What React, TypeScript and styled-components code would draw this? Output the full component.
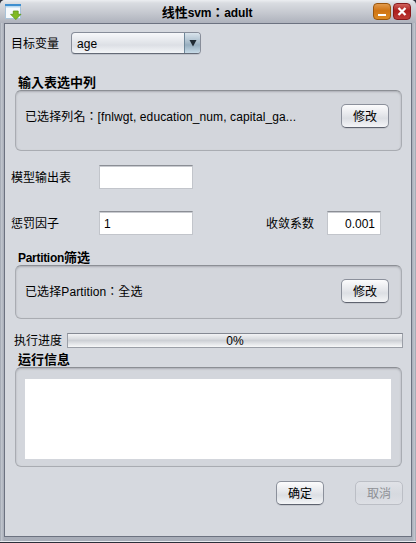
import React from 'react';
import styled, { createGlobalStyle } from 'styled-components';

const GlobalStyle = createGlobalStyle`
  * { box-sizing: border-box; }
  body { margin: 0; overflow: hidden; background: #2b2f3a; }
  input, textarea, button { font: inherit; color: inherit; margin: 0; }
`;

const Frame = styled.div`
  width: 416px;
  height: 542px;
  display: flex;
  flex-direction: column;
  padding: 0 4px 4px;
  background: linear-gradient(90deg, #8d939f 0, #c3c8d0 1px, #a8adb8 4px, #a8adb8 412px, #c3c8d0 415px, #8d939f 416px);
  border-bottom: 1px solid #e9ebef;
  border-radius: 5px 5px 0 0;
  overflow: hidden;
  color: #000;
  font: 12px/16px 'Liberation Sans', 'Noto Sans CJK TC', sans-serif;
`;

const TitleBar = styled.header`
  height: 23px;
  flex: none;
  margin: 0 -4px;
  padding: 3px 5px 0;
  display: grid;
  grid-template-columns: 36px 1fr 38px;
  align-items: start;
  background: linear-gradient(#eceef1 0, #d9dce1 3px, #c7cad1 12px, #aeb2bc 23px);
`;

const Title = styled.h1`
  margin: 1px 0 0;
  text-align: center;
  font-size: 13px;
  line-height: 17px;
  white-space: nowrap;
`;

const TitleLatin = styled.span`
  font-size: 12px;
  letter-spacing: -0.15px;
`;

const Controls = styled.div`
  display: flex;
  gap: 2px;
`;

const ControlButton = styled.button<{ $tone: 'amber' | 'red' }>`
  width: 18px;
  height: 17px;
  padding: 0;
  display: flex;
  border-radius: 4px;
  border: 1px solid ${p => (p.$tone === 'amber' ? '#9a560d' : '#85191b')};
  background: ${p =>
    p.$tone === 'amber'
      ? 'linear-gradient(#e29a4c, #cf7413 45%, #dc8a22)'
      : 'linear-gradient(#d0625c, #ab1f1e 45%, #bd3a35)'};
`;

const Content = styled.main`
  flex: 1;
  display: flex;
  flex-direction: column;
  border: 1px solid #6c7280;
  background: #d6d9df;
  padding: 8px 8px 0 6px;
`;

const Row = styled.div<{ $top?: number }>`
  display: flex;
  align-items: center;
  flex: none;
  margin-top: ${p => p.$top ?? 0}px;
`;

const Label = styled.label<{ $width: number; $gap?: number }>`
  width: ${p => p.$width}px;
  margin-left: ${p => p.$gap ?? 0}px;
  padding-top: 2px;
  white-space: nowrap;
`;

const Combo = styled.div`
  width: 130px;
  height: 22px;
  display: flex;
  border: 1px solid #878d99;
  border-bottom-color: #646a76;
  border-radius: 4px;
  overflow: hidden;
  background: linear-gradient(#f7f8fa, #e1e4e9 50%, #dcdfe5 60%, #f4f6f8);
  box-shadow: 0 1px 0 #bfc3cb;
`;

const ComboValue = styled.span`
  flex: 1;
  padding: 3px 0 0 5px;
  letter-spacing: 0.1px;
`;

const ComboArrow = styled.span`
  width: 16px;
  display: flex;
  align-items: center;
  justify-content: center;
  border-left: 1px solid #6f8799;
  background: linear-gradient(#d9e4ec, #a5b9c8 50%, #97aebf 60%, #c7dbe8);
`;

const Field = styled.input<{ $width: number; $align?: 'left' | 'right' }>`
  width: ${p => p.$width}px;
  height: 24px;
  padding: 1px 5px 0 4px;
  text-align: ${p => p.$align ?? 'left'};
  border: 1px solid #c2c5cb;
  border-top: 1px solid #8b8e95;
  border-radius: 0;
  outline: none;
  background: #fff;
  box-shadow: inset 0 1px 0 #c9cbd0;
`;

const GroupTitle = styled.h2<{ $top: number }>`
  flex: none;
  margin: ${p => p.$top}px 0 0 7px;
  height: 15px;
  font-size: 13px;
  line-height: 16px;
`;

const GroupLatin = styled.span`
  font-size: 12px;
  letter-spacing: -0.3px;
`;

const Group = styled.section<{ $height: number; $bottom?: number }>`
  flex: none;
  width: 387px;
  height: ${p => p.$height}px;
  margin-left: 4px;
  padding: 0 12px ${p => p.$bottom ?? 0}px 9px;
  display: flex;
  align-items: center;
  justify-content: space-between;
  border: 1px solid #a9acb2;
  border-top-color: #8c8f95;
  border-radius: 6px;
  background: #d3d6dc;
  box-shadow: inset 0 1px 2px #aaadb3;
`;

const GroupText = styled.span`
  padding-top: 1px;
  letter-spacing: 0.1px;
  white-space: nowrap;
`;

const Button = styled.button`
  width: 48px;
  height: 24px;
  padding: 1px 0 0;
  line-height: 20px;
  border: 1px solid #8b909b;
  border-bottom-color: #5e636f;
  border-radius: 5px;
  background: linear-gradient(#fcfcfd, #e5e7eb 45%, #dcdfe4 60%, #f4f5f7);
  box-shadow: 0 1px 0 #c3c6cc;

  &:disabled {
    color: #8e9095;
    border-color: #bbbec5;
    background: linear-gradient(#e0e2e7, #d6d9df 55%, #dddfe4);
    box-shadow: none;
  }
`;

const Progress = styled.div`
  width: 336px;
  height: 15px;
  text-align: center;
  line-height: 14px;
  border: 1px solid #9b9fa7;
  border-top-color: #858993;
  background: linear-gradient(#f2f3f5, #dcdee2 35%, #cdd0d5 50%, #e3e5e8 75%, #f7f8f9);
`;

const Log = styled.textarea`
  width: 366px;
  flex: none;
  height: 80px;
  margin-top: 4px;
  border: 0;
  resize: none;
  outline: none;
  background: #fff;
`;

const Actions = styled.div`
  display: flex;
  gap: 31px;
  margin: 14px 0 0 265px;
`;

function WindowIcon() {
  return (
    <svg width="17" height="17" viewBox="0 0 17 17">
      <rect x="0.5" y="1.5" width="15" height="14" fill="#f6f9fc" stroke="#a9c3d9" />
      <path d="M0 1H16V3H0Z" fill="#3f8fd0" />
      <path d="M1 3H15V4.5H1Z" fill="#b9d9f0" />
      <path d="M8.3 8H13.2V11.3H16L10.8 16.6L5.6 11.3H8.3Z" fill="#81ba22" stroke="#5d9815" strokeWidth="0.8" />
    </svg>
  );
}

export default function App() {
  return (
    <>
      <GlobalStyle />
      <Frame>
        <TitleBar>
          <WindowIcon />
          <Title>
            线性<TitleLatin>svm</TitleLatin>：<TitleLatin>adult</TitleLatin>
          </Title>
          <Controls>
            <ControlButton $tone="amber" aria-label="最小化">
              <svg width="16" height="15" viewBox="0 0 16 15">
                <path d="M4 10H12V12H4Z" fill="#fff" />
              </svg>
            </ControlButton>
            <ControlButton $tone="red" aria-label="关闭">
              <svg width="16" height="15" viewBox="0 0 16 15">
                <path d="M4.5 4L11.5 11M11.5 4L4.5 11" stroke="#fff" strokeWidth="2.3" />
              </svg>
            </ControlButton>
          </Controls>
        </TitleBar>
        <Content>
          <Row>
            <Label $width={60}>目标变量</Label>
            <Combo>
              <ComboValue>age</ComboValue>
              <ComboArrow>
                <svg width="8" height="7" viewBox="0 0 8 7">
                  <path d="M0.5 0H7.5L4 6.5Z" fill="#202a33" />
                </svg>
              </ComboArrow>
            </Combo>
          </Row>

          <GroupTitle $top={21}>输入表选中列</GroupTitle>
          <Group $height={61} $bottom={9}>
            <GroupText>已选择列名：[fnlwgt, education_num, capital_ga...</GroupText>
            <Button>修改</Button>
          </Group>

          <Row $top={14}>
            <Label $width={88}>模型输出表</Label>
            <Field $width={94} />
          </Row>
          <Row $top={22}>
            <Label $width={88}>惩罚因子</Label>
            <Field $width={94} defaultValue="1" />
            <Label $width={61} $gap={73}>收敛系数</Label>
            <Field $width={54} $align="right" defaultValue="0.001" />
          </Row>

          <GroupTitle $top={15}>
            <GroupLatin>Partition</GroupLatin>筛选
          </GroupTitle>
          <Group $height={54} $bottom={2}>
            <GroupText>已选择Partition：全选</GroupText>
            <Button>修改</Button>
          </Group>

          <Row $top={12}>
            <Label $width={53} $gap={3}>执行进度</Label>
            <Progress>0%</Progress>
          </Row>

          <GroupTitle $top={3}>运行信息</GroupTitle>
          <Group $height={100}>
            <Log readOnly />
          </Group>

          <Actions>
            <Button>确定</Button>
            <Button disabled>取消</Button>
          </Actions>
        </Content>
      </Frame>
    </>
  );
}
